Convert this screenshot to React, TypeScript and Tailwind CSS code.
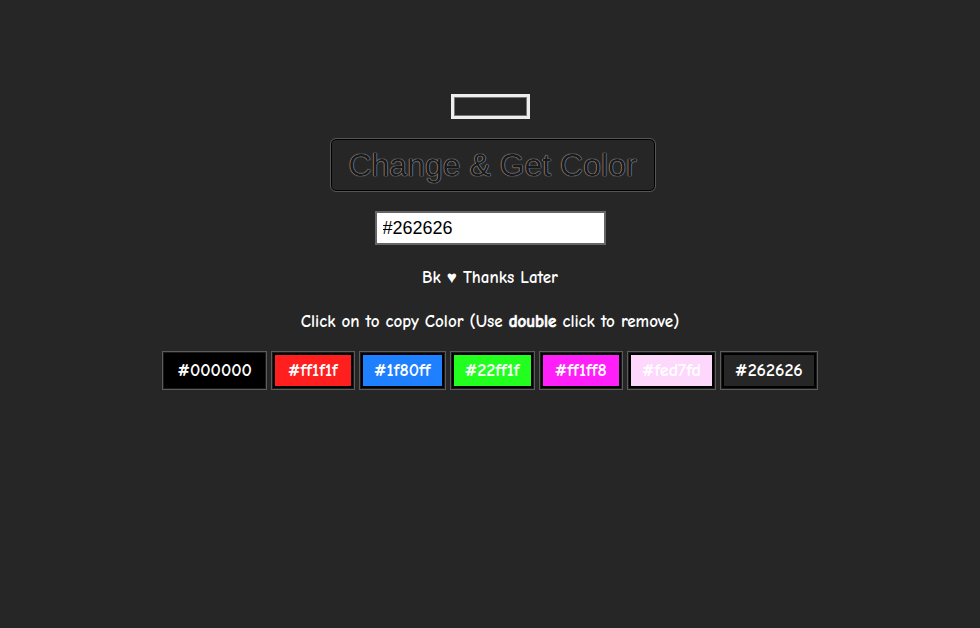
import { useState } from "react";

const initial = ["#000000", "#ff1f1f", "#1f80ff", "#22ff1f", "#ff1ff8", "#fed7fd", "#262626"];

export default function App() {
  const [color, setColor] = useState("#262626");
  const [colors, setColors] = useState<string[]>(initial);

  return (
    <div className="min-h-screen bg-[#262626] flex flex-col items-center pt-[94px] font-['Comic_Sans_MS','Comic_Neue','Open_Sans',sans-serif]">
      {/* empty preview box */}
      <div className="w-[79px] h-[25px] border-[3px] border-[#eeeeee] bg-[#262626] shadow-[inset_0_0_0_1px_#777]" />

      <button
        className="mt-5 ml-[5px] w-[324px] h-[52px] rounded-[5px] border border-black outline outline-1 outline-[#555] bg-[#262626] font-['Liberation_Sans',Arial,sans-serif] text-[32px] text-[#1a1a1a] [text-shadow:0_0_1px_#bbb,0_0_1px_#bbb]"
        onClick={() => setColors([...colors, color])}
      >
        Change &amp; Get Color
      </button>

      <input
        value={color}
        onChange={(e) => setColor(e.target.value)}
        className="mt-5 w-[231px] h-[34px] bg-white border-2 border-[#666] px-[6px] font-['Liberation_Sans',Arial,sans-serif] text-[18px] text-black outline-none"
      />

      <p className="mt-[20px] text-white text-[17px] font-semibold">Bk ♥ Thanks Later</p>

      <p className="mt-[18px] text-white text-[17px] font-semibold">
        Click on to copy Color (Use <b className="font-semibold [-webkit-text-stroke:0.6px_white]">double</b> click to remove)
      </p>

      <div className="mt-[17px] flex gap-1">
        {colors.map((c, i) => (
          <div
            key={i}
            className="border border-[#5c5c5c] p-px bg-[#1c1c1c]"
            onDoubleClick={() => setColors(colors.filter((_, j) => j !== i))}
          >
            <div
              className="h-[35px] min-w-[80px] px-[11px] flex items-center justify-center border-2 border-black text-white text-[18px] font-bold"
              style={{ backgroundColor: c }}
            >
              {c}
            </div>
          </div>
        ))}
      </div>
    </div>
  );
}
